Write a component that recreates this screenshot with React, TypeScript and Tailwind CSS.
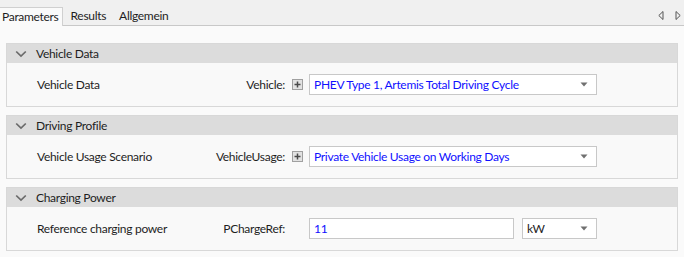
import React from "react";

const font = { fontFamily: 'Lato, "Noto Sans", sans-serif' };

function Chevron() {
  return (
    <svg width="12" height="8" viewBox="0 0 12 8" className="shrink-0">
      <path d="M1.2 1.5 L6 6 L10.8 1.5" fill="none" stroke="#6a6a6a" strokeWidth="1.7" />
    </svg>
  );
}

function PlusBox() {
  return (
    <div className="w-[11px] h-[11px] border border-[#a0a0a0] bg-[#e2e2e2] flex items-center justify-center">
      <svg width="9" height="9" viewBox="0 0 9 9">
        <path d="M4.5 1.5 V7.5 M1.5 4.5 H7.5" stroke="#4a4a4a" strokeWidth="1.5" />
      </svg>
    </div>
  );
}

function DropArrow() {
  return (
    <svg width="8" height="5" viewBox="0 0 8 5">
      <path d="M0.5 0.5 H7.5 L4 4.5 Z" fill="#707070" />
    </svg>
  );
}

function Section({ title, label, name, plus, children }: { title: string; label: string; name: string; plus: boolean; children: React.ReactNode }) {
  return (
    <div className="border border-[#d8d8d8] bg-[#f9f9f9]">
      <div className="h-[19px] bg-[#dcdcdc] flex items-center pl-[8px]">
        <Chevron />
        <span className="ml-[9px] text-[12px] text-[#1e1e1e] leading-none">{title}</span>
      </div>
      <div className="h-[43px] flex items-center">
        <div className="w-[278px] pl-[30px] flex items-center justify-between text-[12px] text-[#1e1e1e]">
          <span>{label}</span>
          <span>{name}</span>
        </div>
        <div className="w-[24px] flex items-center pl-[7px]">{plus ? <PlusBox /> : null}</div>
        {children}
      </div>
    </div>
  );
}

function Select({ value, width }: { value: string; width: string }) {
  return (
    <div className={`${width} h-[21px] border border-[#c8c8c8] bg-white flex items-center pl-[4px] pr-[8px] justify-between`}>
      <span className="text-[12px] text-[#1010ff]">{value}</span>
      <DropArrow />
    </div>
  );
}

export default function App() {
  return (
    <div className="w-[684px] h-[257px] bg-[#fafafa] overflow-hidden tracking-[-0.3px]" style={font}>
      <div className="h-[26px] bg-[#f0f0f0] border-b border-[#c8c8c8] flex items-end relative">
        <div className="h-[19px] pl-[2px] pr-[3px] bg-[#fafafa] border border-b-0 border-[#d0d0d0] border-l-0 flex items-center text-[12px] text-[#1e1e1e] -mb-px">
          Parameters
        </div>
        <div className="h-[19px] flex items-center pl-[8px] text-[12px] text-[#1e1e1e]">Results</div>
        <div className="h-[19px] flex items-center pl-[13px] text-[12px] text-[#1e1e1e]">Allgemein</div>
        <div className="ml-auto h-[19px] flex items-center gap-[11px] pr-[3px]">
          <svg width="6" height="9" viewBox="0 0 6 9">
            <path d="M5 0.5 V8.5 L0.8 4.5 Z" fill="none" stroke="#555" strokeWidth="1" />
          </svg>
          <svg width="6" height="9" viewBox="0 0 6 9">
            <path d="M1 0.5 V8.5 L5.2 4.5 Z" fill="none" stroke="#555" strokeWidth="1" />
          </svg>
        </div>
      </div>
      <div className="pt-[17px] pl-[6px] pr-[6px] flex flex-col gap-[8px]">
        <Section title="Vehicle Data" label="Vehicle Data" name="Vehicle:" plus>
          <Select value="PHEV Type 1, Artemis Total Driving Cycle" width="w-[288px]" />
        </Section>
        <Section title="Driving Profile" label="Vehicle Usage Scenario" name="VehicleUsage:" plus>
          <Select value="Private Vehicle Usage on Working Days" width="w-[288px]" />
        </Section>
        <Section title="Charging Power" label="Reference charging power" name="PChargeRef:" plus={false}>
          <div className="flex items-center gap-[8px]">
            <div className="w-[205px] h-[21px] border border-[#c8c8c8] bg-white flex items-center pl-[4px]">
              <span className="text-[12px] text-[#1010ff]">11</span>
            </div>
            <div className="w-[75px] h-[21px] border border-[#c8c8c8] bg-white flex items-center pl-[4px] pr-[8px] justify-between">
              <span className="text-[12px] text-[#1e1e1e]">kW</span>
              <DropArrow />
            </div>
          </div>
        </Section>
      </div>
    </div>
  );
}
